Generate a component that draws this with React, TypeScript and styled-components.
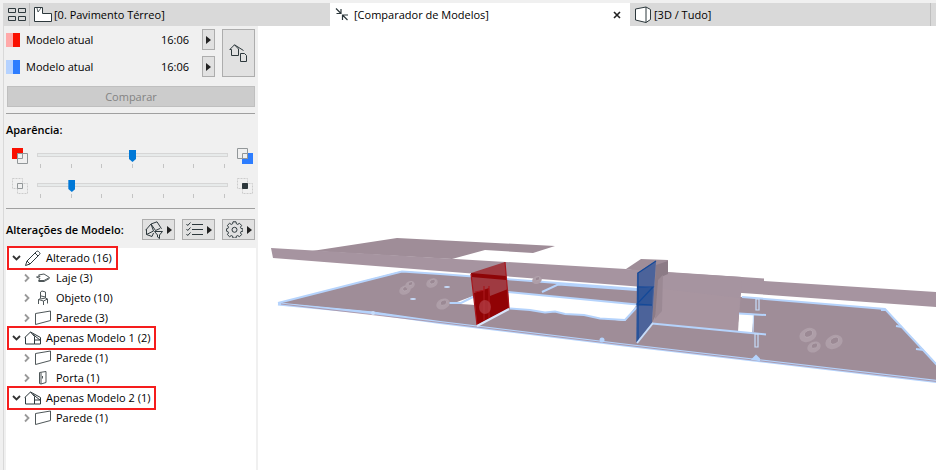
import React, { useState } from "react";
import styled, { createGlobalStyle } from "styled-components";

const GlobalStyle = createGlobalStyle`
    * {
        box-sizing: border-box;
    }
    body {
        margin: 0;
        background-color: #f0f0f0;
        color: #000;
        font-family: "Open Sans", "Noto Sans", sans-serif;
        font-size: 11px;
        line-height: 16px;
    }
    button {
        font: inherit;
        color: inherit;
        padding: 0;
        border: 0;
        background: none;
    }
    svg {
        display: block;
        flex: none;
    }
`;

const Page = styled.div`
    min-height: 100vh;
    display: flex;
    flex-direction: column;
    padding: 3px 0 0 3px;
`;

const TabBar = styled.nav`
    display: flex;
    height: 23px;
    background-color: #d9d9d9;
    border-left: 1px solid #d9d9d9;
`;

const GridButton = styled.button`
    width: 26px;
    border-right: 1px solid #bfbfbf;
    display: flex;
    align-items: center;
    justify-content: center;
`;

const Tab = styled.div<{ $active?: boolean }>`
    flex: 0 1 300px;
    display: flex;
    align-items: center;
    background-color: ${(props) => (props.$active ? "#fff" : "#d9d9d9")};
`;

const TabButton = styled.button`
    flex: 1;
    display: flex;
    align-items: center;
    gap: 2px;
    padding-left: 4px;
    white-space: nowrap;
`;

const CloseButton = styled.button`
    width: 26px;
    display: flex;
    justify-content: center;
`;

const TabEnd = styled.div`
    width: 1px;
    background-color: #bfbfbf;
`;

const Main = styled.div`
    flex: 1;
    display: flex;
`;

const Sidebar = styled.aside`
    flex: 0 0 255px;
    border-left: 1px solid #d9d9d9;
    padding: 3px 2px 0;
    display: flex;
    flex-direction: column;
`;

const Viewport = styled.main`
    flex: 1;
    background-color: #fff;
    svg {
        width: 100%;
    }
`;

const Models = styled.section`
    display: flex;
    gap: 7px;
    padding-right: 1px;
`;

const ModelList = styled.div`
    flex: 1;
    display: flex;
    flex-direction: column;
    gap: 6px;
`;

const ModelRow = styled.div`
    display: flex;
    align-items: center;
    height: 21px;
`;

const Swatch = styled.span<{ $from: string; $to: string }>`
    width: 14px;
    height: 14px;
    margin-right: 6px;
    background: linear-gradient(90deg, ${(props) => props.$from} 50%, ${(props) => props.$to} 50%);
`;

const ModelName = styled.span`
    flex: 1;
`;

const ToolButton = styled.button<{ $width: number }>`
    width: ${(props) => props.$width}px;
    min-height: 21px;
    display: flex;
    align-items: center;
    justify-content: center;
    gap: 4px;
    background-color: #e1e1e1;
    border: 1px solid #adadad;
`;

const TimeLabel = styled.time`
    margin-right: 13px;
`;

const CompareButton = styled.button`
    margin: 9px 1px 6px;
    height: 21px;
    background-color: #ccc;
    border: 1px solid #bfbfbf;
    color: #838383;
`;

const Rule = styled.hr`
    width: 249px;
    margin: 0;
    border: 0;
    border-top: 1px solid #a0a0a0;
`;

const Heading = styled.h2`
    margin: 0;
    flex: 1;
    font-size: 11px;
    line-height: 16px;
    font-weight: 600;
`;

const Appearance = styled.section`
    padding: 8px 0 1px;
`;

const SliderRow = styled.div`
    display: flex;
    align-items: flex-start;
    gap: 9px;
    height: 30px;
    padding: 0 3px 0 6px;
    svg {
        margin-top: 1px;
    }
`;

const Sliders = styled.div`
    padding-top: 9px;
`;

const SliderBody = styled.div`
    flex: 1;
`;

const Range = styled.input`
    appearance: none;
    display: block;
    width: 100%;
    height: 16px;
    margin: 0;
    background: none;
    &::-webkit-slider-runnable-track {
        height: 4px;
        background-color: #e7eaea;
        border: 1px solid #d6d6d6;
    }
    &::-webkit-slider-thumb {
        appearance: none;
        width: 7px;
        height: 12px;
        margin-top: -4px;
        border: 0;
        border-radius: 0;
        background-color: #0078d7;
        clip-path: polygon(0 0, 100% 0, 100% 75%, 50% 100%, 0 75%);
    }
`;

const Ticks = styled.div`
    display: flex;
    justify-content: space-between;
    padding: 0 3px;
    margin-top: 1px;
    span {
        width: 1px;
        height: 4px;
        background-color: #c4c4c4;
    }
`;

const ChangesBar = styled.div`
    display: flex;
    align-items: center;
    gap: 7px;
    padding: 10px 1px 8px 0;
`;

const Tree = styled.ul`
    flex: 1;
    margin: 0;
    padding: 0 0 0 3px;
    background-color: #fff;
    list-style: none;
    ul {
        margin: 0;
        padding: 0 0 0 10px;
        list-style: none;
    }
`;

const TreeItem = styled.button<{ $marked?: boolean }>`
    display: flex;
    align-items: center;
    height: 20px;
    padding: 0 4px 0 2px;
    outline: ${(props) => (props.$marked ? "2px solid #f51d1d" : "none")};
    svg + svg {
        margin: 0 4px 0 0;
    }
`;

const INK = "#2d383c";

const Triangle = () => (
    <svg width="5" height="8" viewBox="0 0 5 8">
        <path d="M0 0 5 4 0 8Z" fill="#222" />
    </svg>
);

const Chevron = ({ open }: { open?: boolean }) => (
    <svg width="13" height="12" viewBox="0 0 13 12" fill="none" strokeWidth="1.8">
        {open ? <path d="M2 4 5.5 7.5 9 4" stroke="#333" /> : <path d="M4 2.5 7.5 6 4 9.5" stroke="#999" />}
    </svg>
);

const GridIcon = () => (
    <svg width="18" height="14" viewBox="0 0 18 14" fill="none" stroke={INK}>
        <path d="M.5.5h7v4h-7zM10.5.5h7v4h-7zM.5 8.5h7v4h-7zM10.5 8.5h7v4h-7z" />
    </svg>
);

const PlanIcon = () => (
    <svg width="18" height="16" viewBox="0 0 18 16" fill="#fff" stroke={INK}>
        <path d="M.5 14.5V.5h8v6h9v8z" />
        <path d="m3 1 1 4 3-4" fill="none" strokeWidth=".8" />
    </svg>
);

const CompareIcon = () => (
    <svg width="18" height="15" viewBox="0 0 18 15" fill="none" stroke={INK} strokeWidth="1.2">
        <path d="M2 1.5 6.5 6M7 2v4.500H2.5M13.5 13 9 8.5M8.5 13V8H14" />
    </svg>
);

const CubeIcon = () => (
    <svg width="18" height="18" viewBox="0 0 18 18" fill="#fff" stroke={INK}>
        <path d="M1.5 3 12 1l4.500 2.500v10L12 16.500 1.500 14z" />
        <path d="M12 1v15.500" />
    </svg>
);

const CloseIcon = () => (
    <svg width="8" height="8" viewBox="0 0 8 8" stroke="#222" strokeWidth="1.600">
        <path d="m1 1 6 6M7 1 1 7" />
    </svg>
);

const HousesIcon = () => (
    <svg width="19" height="18" viewBox="0 0 19 18" fill="none" stroke={INK}>
        <path d="M2.500 11.500V5.500H.8L5.500.8l4 4.200v6.500zM5.500.8 14.500 6.500" />
        <path d="M11.500 9.500h4l2 2v6h-6z" fill="#e1e1e1" />
    </svg>
);

const OverlayIcon = ({ kind }: { kind: "red" | "blue" | "off" | "on" }) => {
    const solid = kind === "red" || kind === "blue";
    return (
        <svg width="16" height="16" viewBox="0 0 16 16" fill="none" stroke="#929799">
            {kind === "red" && <path d="M0 0h11v11H0z" fill="#fa0f00" stroke="none" />}
            {kind === "blue" && <path d="M5 5h11v11H5z" fill="#2d7dff" stroke="none" />}
            {kind === "red" && <path d="M5.500 5.500h10v10h-10z" fill="#f0f0f0" />}
            {kind === "blue" && <path d="M.5.5h10v10H.5z" fill="#f0f0f0" />}
            {solid && <path d="M5.500 5.500h5v5h-5z" />}
            {!solid && <path d="M.5.5h10v10H.5zM5.500 5.500h10v10h-10z" stroke="#ccc" strokeDasharray="2 1" />}
            {!solid && <path d="M5.500 5.500h5v5h-5z" fill={kind === "on" ? INK : "#f0f0f0"} stroke={kind === "on" ? INK : "#929799"} />}
        </svg>
    );
};

const FilterIcon = () => (
    <svg width="18" height="18" viewBox="0 0 18 18" fill="none" stroke={INK}>
        <path d="M1.500 13.500V8.500L.8 9 6 3l4.500 6.500M6 3l6-2.200 4.500 7M1.500 13.500l5.500 2 1.500-3.500M6 3l2.500 7M10.500 9.500 15 7.500M1.500 13.500 8.500 10" />
        <path d="M9.500 10.500h8l-3 3.500v3.500l-2-1.500v-2z" fill="#e1e1e1" />
    </svg>
);

const ChecklistIcon = () => (
    <svg width="17" height="15" viewBox="0 0 17 15" fill="none" stroke={INK}>
        <path d="M6 2.500h11M6 7.500h11M6 12.500h11" strokeWidth="1.200" />
        <path d="m.5 2 1.200 1.500L4.500.5M.5 7l1.200 1.500 2.800-3M.5 12l1.200 1.500 2.800-3" />
    </svg>
);

const GearIcon = () => (
    <svg width="17" height="17" viewBox="0 0 17 17" fill="none" stroke={INK}>
        <path d="M7 .8h3l.4 2 1.300.6 1.800-1.100 2.100 2.100-1.100 1.800.5 1.300 2 .4v2.200l-2 .4-.5 1.400 1.100 1.700-2.100 2.100-1.800-1.100-1.300.5-.4 2H7l-.4-2-1.300-.5-1.800 1.100-2.100-2.100 1.100-1.700-.6-1.400-1.500-.4V7.900l1.500-.4.6-1.300-1.100-1.800 2.100-2.100 1.800 1.100 1.300-.6z" />
        <circle cx="8.500" cy="8.800" r="2.500" />
    </svg>
);

const PencilIcon = () => (
    <svg width="18" height="17" viewBox="0 0 18 17" fill="none" stroke={INK}>
        <path d="m1.500 15.500 1.500-4.500L12.500 1.500q1-.8 2 0l1 1q1 1 0 2L6 14zM3 11l3 3M11 3l3 3" />
    </svg>
);

const HouseIcon = () => (
    <svg width="18" height="14" viewBox="0 0 18 14" fill="none" stroke={INK}>
        <path d="M1.500 13V6.500H.8L6.500 1l4 4.500V13zM6.500 1l10 5.500V13h-6M10.500 9h6M9 3.500 16 9" />
    </svg>
);

const SlabIcon = () => (
    <svg width="18" height="12" viewBox="0 0 18 12" fill="none" stroke="#4f5759">
        <path d="m2.500 5 3.500-.5L4.500 3 10 2l5.500 3.500-5.500 3H4.500L6 6.500z" />
        <path d="M4.500 9.500H10l5.500-3" />
    </svg>
);

const ChairIcon = () => (
    <svg width="18" height="16" viewBox="0 0 18 16" fill="none" stroke="#4f5759">
        <path d="M6.500 8.500V2L8 1l3.500 1v6M6.500 8.500l-2 1V14M4.500 9.500l5 1.500V15M9.500 11l4-2-2-1-5 1M13.500 9v4.500M7 6l4.500 1" />
    </svg>
);

const WallIcon = () => (
    <svg width="18" height="16" viewBox="0 0 18 16" fill="none" stroke="#4f5759">
        <path d="M1.500 3.500 16.500 1v9.500l-15 4z" />
    </svg>
);

const DoorIcon = () => (
    <svg width="18" height="16" viewBox="0 0 18 16" fill="none" stroke="#4f5759">
        <path d="M5.500 2.500 12 1.500v11l-5 1.500-1.500-.5zM7 2.500V14M8.500 6v2.500" />
    </svg>
);

const Stool = ({ x, y, r }: { x: number; y: number; r: number }) => (
    <g transform={`translate(${x} ${y}) rotate(-25)`}>
        <ellipse rx={r} ry={r * 0.75} fill="#ae9ea8" />
        <ellipse rx={r * 0.5} ry={r * 0.35} cx="1" cy="-1" fill="#9b8994" stroke="#b9abb4" strokeWidth=".7" />
    </g>
);

const BuildingScene = () => (
    <svg viewBox="258 26 678 444" role="img" aria-label="Modelo 3D">
        {/* floor slab */}
        <path d="M278 303 402 271 440 274 637 289 742 297 885 309 937 364V382L620 344 440 322 373 312Z" fill="#9f8d98" />
        <path d="M278 303 402 271.500 440 274 637 289M742 297 885 309 937 365" fill="none" stroke="#b5d3fc" strokeWidth="2" />
        <path d="M278 304 373 313 440 322.500 620 344.500 937 381.500" fill="none" stroke="#b5d3fc" strokeWidth="3" />
        <path d="M281 304 440 322.500 620 344.500 937 381.500" fill="none" stroke="#a78b9a" strokeWidth=".8" />
        {/* openings */}
        <path d="M453 303.500 473 296 508 292 637 304.500 625 321 600 318.500 584 315 565 314 555 311.500 545 312.500 530 310 508 308 490 306Z" fill="#fff" />
        <path d="M449 303 461 303 474 296.500M508 292 637 304.500M637 307 625 320 600 318.500 584 315 565 314 555 311.500 545 312.500 530 310 510 308.500" fill="none" stroke="#b5d3fc" strokeWidth="2" />
        <path d="M542 292 558 284.500 637 290" fill="none" stroke="#b5d3fc" strokeWidth="2" />
        <path d="M739 313 754 314 752 332 737 332Z" fill="#fff" />
        {/* roof */}
        <path d="M312 251 397 238 555 246 533 253 485 250 452 259Z" fill="#9f8d98" />
        <path d="M626 269 641 259 668 260V272L656 274Z" fill="#9f8d98" />
        <path d="M271 248 626 269 660 272 742 277 764 278.500V281L937 292V307L742 293 637 286.500 273 258Z" fill="#a694a0" />
        {/* rear walls */}
        <path d="M652 276 668 272 742 277 741 294 739 314 737 332 652 323Z" fill="#a694a0" />
        <path d="M655 288 740 298 738 332 652 323Z" fill="#a895a0" />
        <path d="m656 265 12-4v13l-7 3-3 33-6 13z" fill="#8c7b86" />
        <path d="m658 280 5-5-1 36-7 8z" fill="#9b8994" />
        <path d="M652 323.500 766 334.500M739 313.500 766 315" fill="none" stroke="#b5d3fc" strokeWidth="2" />
        <path d="M756 299h3v11h-3zM753.500 315 753 332M755 334h3v13h-3z" fill="none" stroke="#c6dcfa" strokeWidth="1.200" />
        <path d="m753 359 3-3 3 3v1zM896 326l6 1M916 349l8 1M881 310h5" fill="#b5d3fc" stroke="#b5d3fc" strokeWidth="2" />
        <circle cx="602" cy="340" r="2.500" fill="#b5d3fc" />
        <circle cx="373" cy="313" r="2" fill="#c6dcfa" />
        <ellipse cx="447" cy="287" rx="3" ry="1" fill="#c6dcfa" />
        <ellipse cx="413" cy="299" rx="3" ry="1" fill="#c6dcfa" />
        <Stool x={405} y={290} r={6} />
        <Stool x={410} y={285} r={5} />
        <Stool x={432} y={283} r={6} />
        <Stool x={443} y={304} r={7} />
        <Stool x={537} y={280} r={5} />
        <Stool x={814} y={347} r={7} />
        <Stool x={808} y={335} r={9} />
        <Stool x={834} y={342} r={9} />
        {/* red wall */}
        <path d="M471 273 505 262 509 308 477 325Z" fill="#9f3a41" />
        <path d="m471 273 35 3 .5 4-35-3z" fill="#8e0507" />
        <path d="m474 293 15-5 1 8 18-7 1 19-32 17z" fill="#910305" />
        <path d="m471 274 6 51M484 286v34M489 286v32M475 292l10-2M505 262l4 46" fill="none" stroke="#a8161c" strokeWidth="1.200" />
        <ellipse cx="485" cy="307" rx="6" ry="7" fill="#b34248" opacity=".7" />
        <path d="m477 326 32-17" stroke="#d8e5fa" strokeWidth="2" />
        {/* blue wall */}
        <path d="M637 273 656 261 652 323 636 343Z" fill="#4c639a" />
        <path d="m637 286 16 2-1 18h-15z" fill="#305597" />
        <path d="M637 287h16L637 304l15 1M656 261 638 273v69" fill="none" stroke="#134999" strokeWidth="1.200" />
        <path d="m637 343 16-20" stroke="#c6dcfa" strokeWidth="2" />
    </svg>
);

const models = [
    { name: "Modelo atual", time: "16:06", from: "#ffa9a9", to: "#fa0f00" },
    { name: "Modelo atual", time: "16:06", from: "#b5d2ff", to: "#2d7dff" },
];

const changes = [
    {
        label: "Alterado (16)",
        icon: <PencilIcon />,
        items: [
            { label: "Laje (3)", icon: <SlabIcon /> },
            { label: "Objeto (10)", icon: <ChairIcon /> },
            { label: "Parede (3)", icon: <WallIcon /> },
        ],
    },
    {
        label: "Apenas Modelo 1 (2)",
        icon: <HouseIcon />,
        items: [
            { label: "Parede (1)", icon: <WallIcon /> },
            { label: "Porta (1)", icon: <DoorIcon /> },
        ],
    },
    {
        label: "Apenas Modelo 2 (1)",
        icon: <HouseIcon />,
        items: [{ label: "Parede (1)", icon: <WallIcon /> }],
    },
];

interface ISlider {
    label: string;
    start: number;
    left: React.ReactNode;
    right: React.ReactNode;
}

function Slider({ label, start, left, right }: ISlider) {
    const [value, setValue] = useState(start);
    return (
        <SliderRow>
            {left}
            <SliderBody>
                <Range
                    type="range"
                    min={0}
                    max={6}
                    value={value}
                    aria-label={label}
                    onChange={(e) => setValue(Number(e.target.value))}
                />
                <Ticks>
                    {[0, 1, 2, 3, 4, 5, 6].map((tick) => <span key={tick} />)}
                </Ticks>
            </SliderBody>
            {right}
        </SliderRow>
    );
}

function App() {
    return (
        <Page>
            <GlobalStyle />
            <TabBar>
                <GridButton aria-label="Abas"><GridIcon /></GridButton>
                <Tab>
                    <TabButton><PlanIcon />[0. Pavimento Térreo]</TabButton>
                </Tab>
                <Tab $active>
                    <TabButton><CompareIcon />[Comparador de Modelos]</TabButton>
                    <CloseButton aria-label="Fechar"><CloseIcon /></CloseButton>
                </Tab>
                <Tab>
                    <TabButton><CubeIcon />[3D / Tudo]</TabButton>
                </Tab>
                <TabEnd />
            </TabBar>
            <Main>
                <Sidebar>
                    <Models>
                        <ModelList>
                            {models.map((model, index) => (
                                <ModelRow key={index}>
                                    <Swatch $from={model.from} $to={model.to} />
                                    <ModelName>{model.name}</ModelName>
                                    <TimeLabel>{model.time}</TimeLabel>
                                    <ToolButton $width={13} aria-label="Escolher modelo"><Triangle /></ToolButton>
                                </ModelRow>
                            ))}
                        </ModelList>
                        <ToolButton $width={33} aria-label="Modelos"><HousesIcon /></ToolButton>
                    </Models>
                    <CompareButton disabled>Comparar</CompareButton>
                    <Rule />
                    <Appearance>
                        <Heading>Aparência:</Heading>
                        <Sliders>
                            <Slider label="Cor" start={3} left={<OverlayIcon kind="red" />} right={<OverlayIcon kind="blue" />} />
                            <Slider label="Opacidade" start={1} left={<OverlayIcon kind="off" />} right={<OverlayIcon kind="on" />} />
                        </Sliders>
                    </Appearance>
                    <Rule />
                    <ChangesBar>
                        <Heading>Alterações de Modelo:</Heading>
                        <ToolButton $width={33} aria-label="Filtro"><FilterIcon /><Triangle /></ToolButton>
                        <ToolButton $width={33} aria-label="Lista"><ChecklistIcon /><Triangle /></ToolButton>
                        <ToolButton $width={33} aria-label="Opções"><GearIcon /><Triangle /></ToolButton>
                    </ChangesBar>
                    <Tree>
                        {changes.map((group) => (
                            <li key={group.label}>
                                <TreeItem $marked><Chevron open />{group.icon}{group.label}</TreeItem>
                                <ul>
                                    {group.items.map((item) => (
                                        <li key={item.label}>
                                            <TreeItem><Chevron />{item.icon}{item.label}</TreeItem>
                                        </li>
                                    ))}
                                </ul>
                            </li>
                        ))}
                    </Tree>
                </Sidebar>
                <Viewport>
                    <BuildingScene />
                </Viewport>
            </Main>
        </Page>
    );
}

export default App;
